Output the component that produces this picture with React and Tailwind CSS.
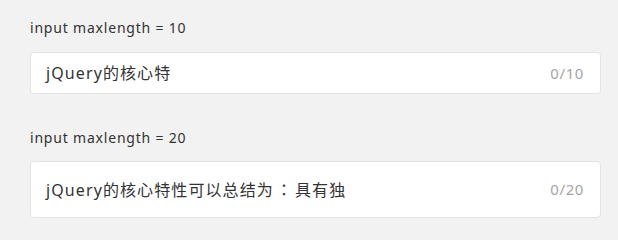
import React from "react";

const font = { fontFamily: '"Noto Sans", "Noto Sans CJK SC", sans-serif' };
const jp = { fontFamily: '"Noto Sans CJK JP", "Noto Sans CJK SC", sans-serif' };

export default function App() {
  return (
    <div
      className="w-[618px] h-[240px] bg-[#f2f2f2] pl-[30px] pr-[17px] pt-[18px]"
      style={font}
    >
      <div>
        <div className="text-[14px] leading-[20px] tracking-[0.8px] text-[#333333]">input maxlength = 10</div>
        <div className="mt-[14px] h-[42px] flex items-center justify-between bg-white border border-[#e3e3e3] rounded-[4px] pl-[15px] pr-[16px]">
          <span className="text-[16px] tracking-[1.1px] text-[#333333]">jQuery的核心特</span>
          <span className="text-[15px] tracking-[0.6px] text-[#a6a6a6]">0/10</span>
        </div>
      </div>
      <div className="mt-[34px]">
        <div className="text-[14px] leading-[20px] tracking-[0.8px] text-[#333333]">input maxlength = 20</div>
        <div className="mt-[13px] h-[57px] flex items-center justify-between bg-white border border-[#e3e3e3] rounded-[4px] pl-[15px] pr-[16px]">
          <span className="text-[16px] tracking-[1.1px] text-[#333333]">
            jQuery的核心特性可以总结为<span className="px-[2px]" style={jp}>：</span>具有独
          </span>
          <span className="text-[15px] tracking-[0.6px] text-[#a6a6a6]">0/20</span>
        </div>
      </div>
    </div>
  );
}
